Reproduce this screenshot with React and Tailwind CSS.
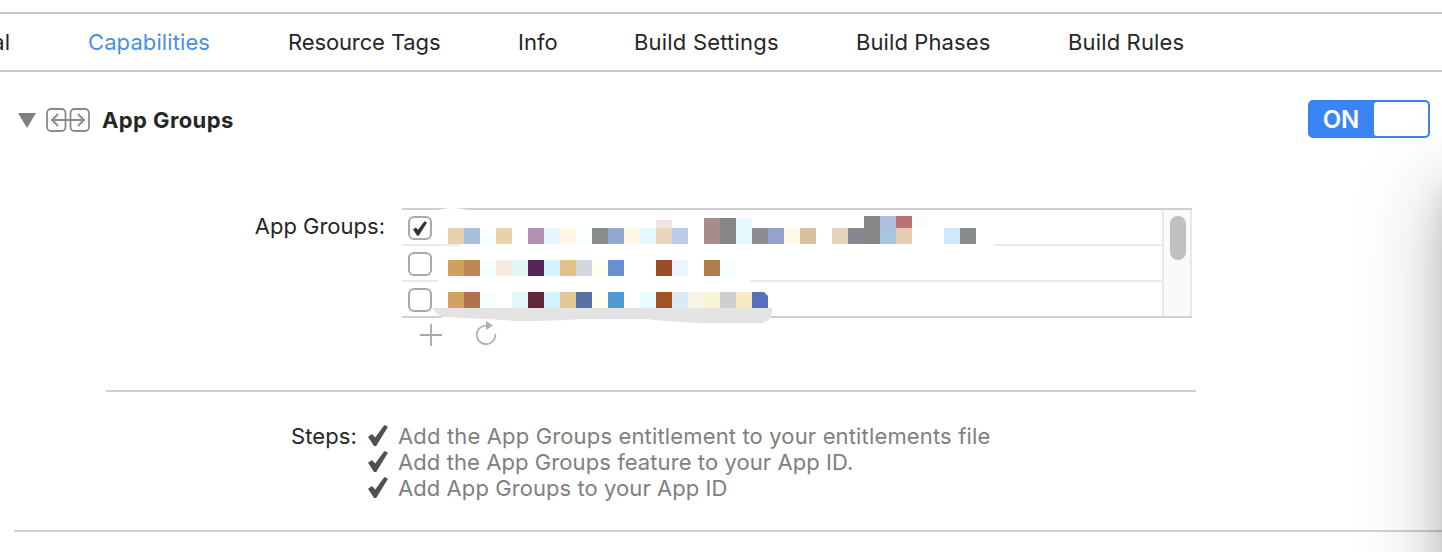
import React from 'react';

const tabs = [
  ['Capabilities', 'w-[122px] tracking-[0.1px] text-[#4a90e2]'],
  ['Resource Tags', 'w-[152px] tracking-[-0.12px]'],
  ['Info', 'w-[38px] tracking-[0px]'],
  ['Build Settings', 'w-[144px] tracking-[0.2px]'],
  ['Build Phases', 'w-[134px] tracking-[0.1px]'],
  ['Build Rules', 'w-[116px] tracking-[0.15px]'],
];

// Mosaic blocks: [column, top, height, colour]; every column is 16px wide.
const blocks = [
  [0, 20, 16, '#e8d1b0'], [1, 20, 16, '#a9c0dc'], [2, 20, 16, '#f8ffff'], [3, 20, 16, '#e8d1ab'],
  [5, 20, 16, '#b092ae'], [6, 20, 16, '#e6f6ff'], [7, 20, 16, '#fff7e4'], [8, 20, 16, '#f8ffff'],
  [9, 20, 16, '#888c8c'], [10, 20, 16, '#90a8d2'], [11, 20, 16, '#fff6e4'], [12, 20, 16, '#e8f8ff'],
  [13, 12, 8, '#f1e3e1'], [13, 20, 16, '#e8d5bc'], [14, 20, 16, '#b9cce8'],
  [16, 10, 26, '#a68c8c'], [17, 10, 26, '#868686'], [18, 10, 26, '#e8f8ff'],
  [19, 20, 16, '#8c8c92'], [20, 20, 16, '#94a2d2'], [21, 20, 16, '#fff9ea'], [22, 20, 16, '#d6c0a0'],
  [24, 20, 16, '#e5d2bb'], [25, 20, 16, '#868890'], [26, 8, 28, '#868888'],
  [27, 8, 12, '#acc0de'], [27, 20, 16, '#a9c4e2'], [28, 8, 12, '#bb7272'], [28, 20, 16, '#e8ccb0'],
  [29, 8, 12, '#f6fcff'], [31, 20, 16, '#d0e8fa'], [32, 20, 16, '#868a8a'],
  [0, 52, 16, '#cea05c'], [1, 52, 16, '#bc8654'], [2, 52, 16, '#f3ffff'], [3, 52, 16, '#f5ebde'],
  [4, 52, 16, '#e4f5f5'], [5, 52, 16, '#56265a'], [6, 52, 16, '#d2f2ff'], [7, 52, 16, '#e2c288'],
  [8, 52, 16, '#d2d6de'], [9, 52, 16, '#fffff0'], [10, 52, 16, '#6690d0'], [13, 52, 16, '#984c24'],
  [14, 52, 16, '#ebf5ff'], [16, 52, 16, '#b07e48'], [17, 52, 16, '#f5ffff'],
  [0, 84, 16, '#d2a262'], [1, 84, 16, '#b27252'], [2, 84, 16, '#f3ffff'], [4, 84, 16, '#e4f6f8'],
  [5, 84, 16, '#602838'], [6, 84, 16, '#d2f2ff'], [7, 84, 16, '#e6c694'], [8, 84, 16, '#5872a6'],
  [9, 84, 16, '#fffff0'], [10, 84, 16, '#5098d0'], [12, 84, 16, '#eafcff'], [13, 84, 16, '#a05424'],
  [14, 84, 16, '#dce8f4'], [15, 84, 16, '#f8f4e8'], [16, 84, 16, '#f6f5d6'], [17, 84, 16, '#ccd0d2'],
  [18, 84, 16, '#f7e8c0'],
];

const steps = [
  ['Add the App Groups entitlement to your entitlements file', 'tracking-[0.15px]'],
  ['Add the App Groups feature to your App ID.', 'tracking-[0.08px]'],
  ['Add App Groups to your App ID', 'tracking-[0.07px]'],
];

function Tick({ className }) {
  return (
    <svg className={className} viewBox="0 0 20 21" fill="currentColor">
      <path d="M0 11.8 L4 9 L7.2 12.4 L16.4 0 L20 1.8 L8.2 21 L6 21 Z" />
    </svg>
  );
}

function Checkbox({ checked }) {
  return (
    <span className="flex h-6 w-6 items-center justify-center rounded-[6px] border-2 border-[#a9a9a9] bg-white text-[#333]">
      {checked && <Tick className="h-[15px] w-[14px]" />}
    </span>
  );
}

function Redaction() {
  return (
    <svg className="absolute left-[30px] top-0 h-[118px] w-[580px]" viewBox="0 0 580 118" shapeRendering="crispEdges">
      <path d="M28 30 H562 V38 H28Z M6 66 H318 V76 H6Z M10 100 H338 V112 H10Z" fill="#fff" />
      <path d="M6 2 Q20 -2 36 2 L30 4 H10Z" fill="#fff" shapeRendering="auto" />
      {blocks.map(([col, y, h, fill], i) => (
        <rect key={i} x={16 + col * 16} y={y} width="16" height={h} fill={fill} />
      ))}
      <g shapeRendering="auto">
        <path d="M320 84 H332 L336 88 V100 H320Z" fill="#5670ba" />
        <path d="M0 100 H341 L338 110 Q335 114 330 115 L270 115 Q240 114 215 111 L150 111 Q120 113 85 113 L55 111 L10 109 Q4 106 0 100Z" fill="#e3e3e3" />
      </g>
    </svg>
  );
}

export default function App() {
  return (
    <div className="relative h-[552px] w-[1442px] overflow-hidden bg-white font-['Inter','Liberation_Sans',sans-serif] text-[22px] leading-[26px] text-[#262626]">
      <nav className="mt-3 flex h-[60px] items-center gap-[78px] border-y-2 border-[#c6c6c6] whitespace-nowrap">
        <span className="flex w-[10px] justify-end">General</span>
        {tabs.map(([label, cls]) => (
          <span key={label} className={cls}>{label}</span>
        ))}
      </nav>

      <header className="flex h-24 items-center pl-[18px] pr-3">
        <svg className="h-[15px] w-[18px]" viewBox="0 0 18 15"><path d="M0 0H18L9 15Z" fill="#808080" /></svg>
        <svg className="ml-[10px] h-6 w-11" viewBox="0 0 44 24" fill="none" stroke="#8a8a8a" strokeWidth="1.8">
          <rect x="1" y="1" width="18.5" height="22" rx="4" />
          <rect x="24.5" y="1" width="18.5" height="22" rx="4" />
          <path d="M6 12H38 M12 6L6 12L12 18 M32 6L38 12L32 18" />
        </svg>
        <h1 className="ml-3 text-[22px] font-bold tracking-[0.4px]">App Groups</h1>
        <div className="mb-0.5 ml-auto flex h-[38px] w-[122px] rounded-[5px] border-2 border-[#3c82ea] bg-[#3a84f5]">
          <span className="flex w-16 items-center justify-center pr-0.5 pt-0.5 text-[24px] font-semibold text-white">ON</span>
          <span className="flex-1 rounded-[3px] bg-white" />
        </div>
      </header>

      <section className="mt-10 flex">
        <div className="w-[385px] pt-[5px] text-right whitespace-nowrap">App Groups:</div>
        <div className="relative ml-[17px] flex h-[110px] w-[790px] border-y-2 border-[#d0d0d0]">
          <div className="flex-1">
            <div className="h-9 border-b-2 border-[#ebebeb] pl-1.5 pt-1.5"><Checkbox checked /></div>
            <div className="h-9 border-b-2 border-[#ebebeb] pl-1.5 pt-1.5"><Checkbox /></div>
            <div className="pl-1.5 pt-1.5"><Checkbox /></div>
          </div>
          <div className="flex w-[30px] border-x-2 border-[#e8e8e8] bg-[#fafafa] pl-1.5 pt-1.5">
            <span className="h-11 w-4 rounded-full bg-[#c1c1c1]" />
          </div>
          <div className="absolute -top-0.5 left-0"><Redaction /></div>
        </div>
      </section>

      <div className="ml-[420px] mt-[3px] flex h-[25px] items-start gap-[33px]">
        <svg className="mt-[3px] h-[22px] w-[22px]" viewBox="0 0 22 22" stroke="#a8a8a8" strokeWidth="1.8"><path d="M11 0V22M0 11H22" /></svg>
        <svg className="h-6 w-[22px]" viewBox="0 0 22 24" fill="none" stroke="#b0b0b0" strokeWidth="1.8">
          <path d="M12 4.6 A9.3 9.3 0 1 0 20.3 13" />
          <path d="M11 0L18 4.5L11 9Z" fill="#b0b0b0" stroke="none" />
        </svg>
      </div>

      <div className="ml-[106px] mt-[44px] h-0.5 w-[1090px] bg-[#d0d0d0]" />

      <section className="mt-[31px] flex">
        <div className="w-[357px] text-right tracking-[0.1px]">Steps:</div>
        <ul className="ml-[11px]">
          {steps.map(([text, cls]) => (
            <li key={text} className="flex h-[26px] whitespace-nowrap text-[#808080]">
              <Tick className="mr-[10px] mt-0.5 h-[21px] w-5 text-[#505050]" />
              <span className={cls}>{text}</span>
            </li>
          ))}
        </ul>
      </section>

      <div className="ml-[14px] mt-[29px] h-0.5 bg-[#d0d0d0]" />

      <div className="absolute left-[1442px] top-[180px] h-[610px] w-[600px] shadow-[0_10px_80px_rgba(0,0,0,0.25),0_10px_30px_rgba(0,0,0,0.12)]" />
    </div>
  );
}
